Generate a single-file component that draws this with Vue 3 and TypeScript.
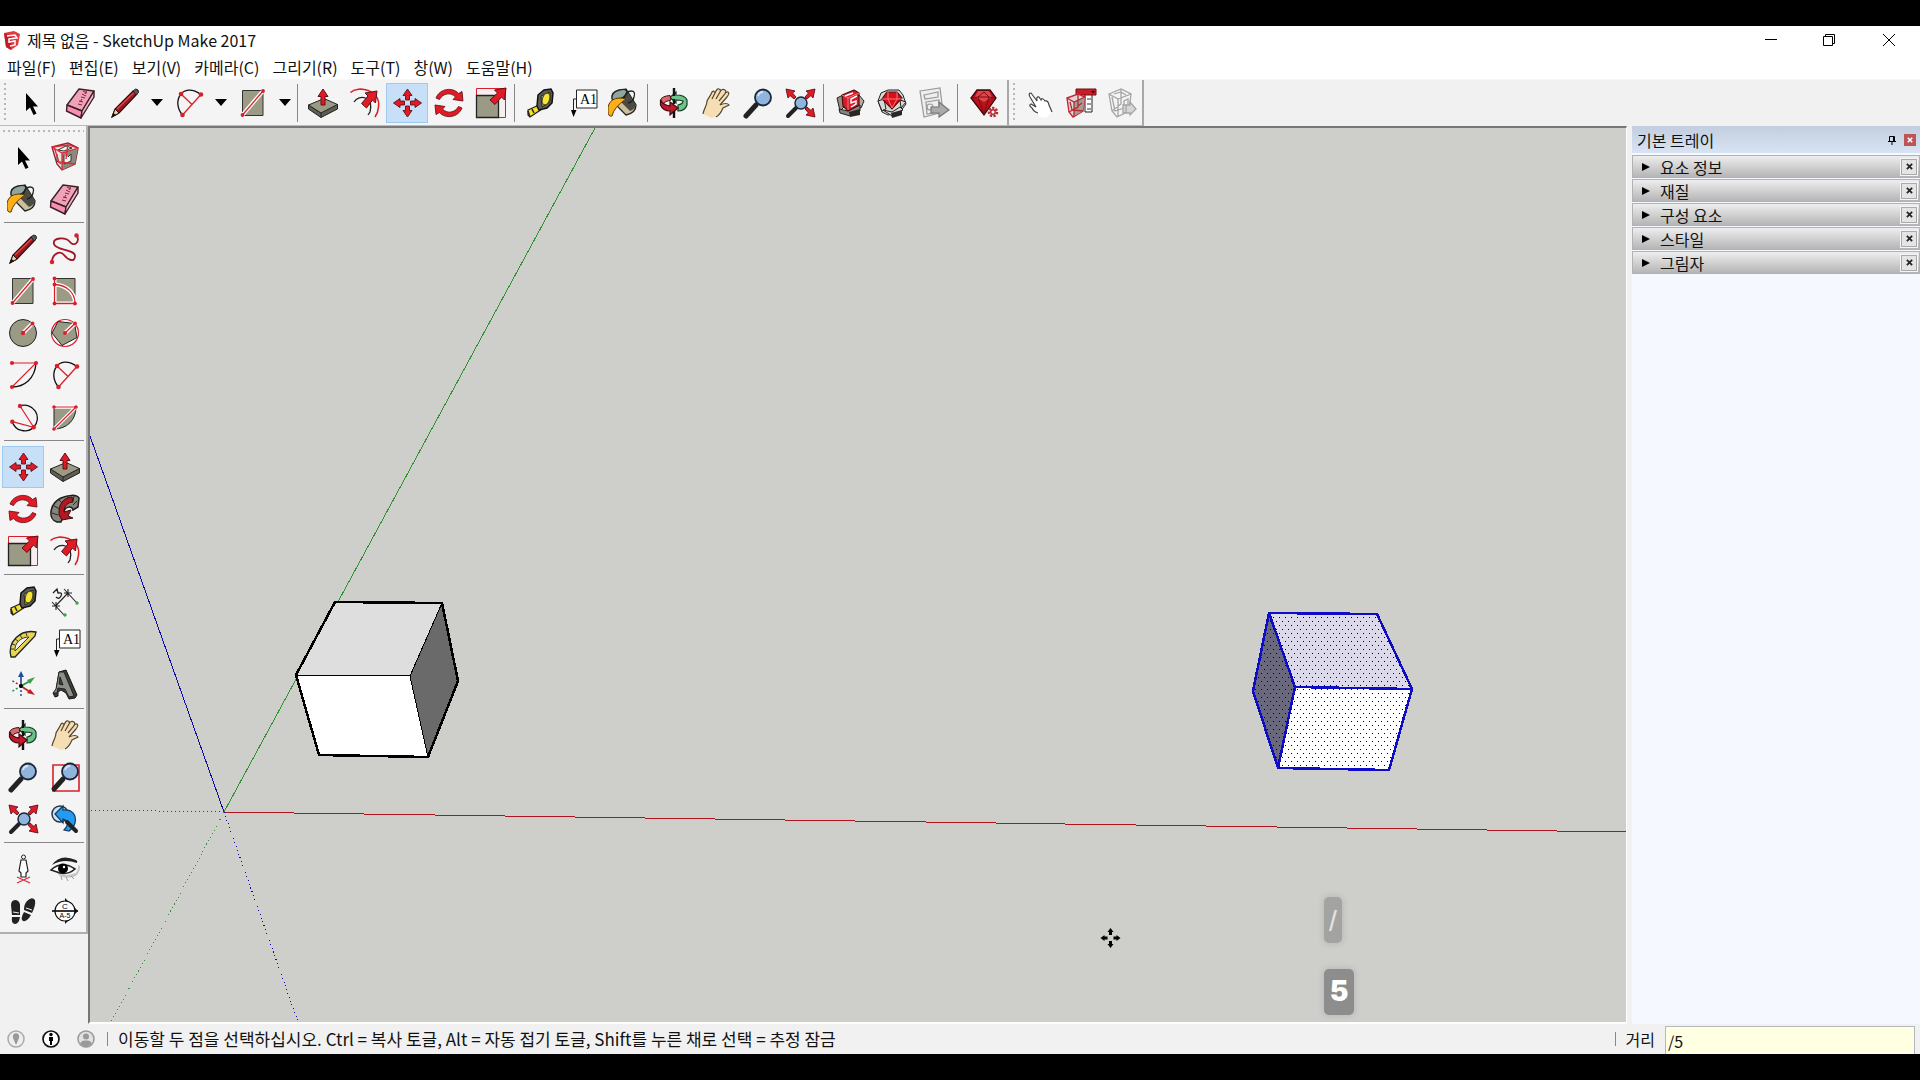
<script setup lang="ts">
import { ref } from 'vue'

interface Tool {
  icon: string
  label: string
  split?: boolean
}

const menus = ['파일(F)', '편집(E)', '보기(V)', '카메라(C)', '그리기(R)', '도구(T)', '창(W)', '도움말(H)']

const mainGroups: Tool[][] = [
  [{ icon: 'select', label: '선택' }],
  [
    { icon: 'eraser', label: '지우개' },
    { icon: 'pencil', label: '선', split: true },
    { icon: 'arc2', label: '호', split: true },
    { icon: 'rect', label: '직사각형', split: true },
  ],
  [
    { icon: 'pushpull', label: '밀기/끌기' },
    { icon: 'offset', label: '오프셋' },
    { icon: 'move', label: '이동' },
    { icon: 'rotate', label: '회전' },
    { icon: 'scale', label: '배율' },
  ],
  [
    { icon: 'tape', label: '줄자' },
    { icon: 'text', label: '텍스트' },
    { icon: 'bucket', label: '페인트통' },
  ],
  [
    { icon: 'orbit', label: '궤도' },
    { icon: 'hand', label: '화면이동' },
    { icon: 'zoom', label: '확대/축소' },
    { icon: 'extents', label: '범위 확대/축소' },
  ],
  [
    { icon: 'warehouse', label: '3D Warehouse' },
    { icon: 'extwarehouse', label: 'Extension Warehouse' },
    { icon: 'layout', label: 'LayOut' },
  ],
  [{ icon: 'gem', label: '확장 관리자' }],
]

const dynamicTools: Tool[] = [
  { icon: 'pointer', label: '상호 작용' },
  { icon: 'options', label: '구성 요소 옵션' },
  { icon: 'attributes', label: '구성 요소 속성' },
]

const sideGroups: Tool[][] = [
  [
    { icon: 'select', label: '선택' },
    { icon: 'component', label: '구성 요소 만들기' },
    { icon: 'bucket', label: '페인트통' },
    { icon: 'eraser', label: '지우개' },
  ],
  [
    { icon: 'pencil', label: '선' },
    { icon: 'freehand', label: '자유곡선' },
    { icon: 'rect', label: '직사각형' },
    { icon: 'rotrect', label: '회전된 직사각형' },
    { icon: 'circle', label: '원' },
    { icon: 'polygon', label: '다각형' },
    { icon: 'arc', label: '호' },
    { icon: 'arc2', label: '2점 호' },
    { icon: 'arc3', label: '3점 호' },
    { icon: 'pie', label: '파이' },
  ],
  [
    { icon: 'move', label: '이동' },
    { icon: 'pushpull', label: '밀기/끌기' },
    { icon: 'rotate', label: '회전' },
    { icon: 'follow', label: '따라가기' },
    { icon: 'scale', label: '배율' },
    { icon: 'offset', label: '오프셋' },
  ],
  [
    { icon: 'tape', label: '줄자' },
    { icon: 'dimension', label: '치수' },
    { icon: 'protractor', label: '각도기' },
    { icon: 'text', label: '텍스트' },
    { icon: 'axes', label: '축' },
    { icon: 'text3d', label: '3D 텍스트' },
  ],
  [
    { icon: 'orbit', label: '궤도' },
    { icon: 'hand', label: '화면이동' },
    { icon: 'zoom', label: '확대/축소' },
    { icon: 'zoomwindow', label: '확대/축소 창' },
    { icon: 'extents', label: '범위 확대/축소' },
    { icon: 'previous', label: '이전' },
  ],
  [
    { icon: 'camera', label: '카메라 배치' },
    { icon: 'eye', label: '둘러보기' },
    { icon: 'walk', label: '걷기' },
    { icon: 'section', label: '단면' },
  ],
]

const panels = ['요소 정보', '재질', '구성 요소', '스타일', '그림자']

const activeTool = ref('move')
const distance = ref('/5')
</script>

<template>
  <div class="screen">
    <svg class="sprite" aria-hidden="true">
      <defs>
        <symbol id="select" viewBox="0 0 32 32">
          <path d="M11 6V24L15 20.500L18.500 28L21.500 26.500L18 19.500H23Z" fill="#000" />
        </symbol>
        <symbol id="eraser" viewBox="0 0 32 32">
          <g stroke="#3a2028" stroke-width="1.400" stroke-linejoin="round">
            <path d="M14 2L29 4L17 24L2 18Z" fill="#f0a3b8" />
            <path d="M2 18L17 24L16 31L1.500 24Z" fill="#fb8fae" />
            <path d="M29 4V10L16 31L17 24Z" fill="#f9bccb" />
          </g>
          <path d="M13 17l4 1m-3-4l4 1m-3 0l2-3m-1-2l4 1m-3-4l4 2m-3-5l4 2m0-3l-2 4" stroke="#7d2540" stroke-width="1" fill="none" />
        </symbol>
        <symbol id="pencil" viewBox="0 0 32 32">
          <path d="M3 30L6 22L24 4L28 7L10 26Z" fill="#a8141b" stroke="#2a1010" stroke-width="1.200" />
          <path d="M8 22L25 5.500" stroke="#dd4a4a" stroke-width="1.300" />
          <path d="M3 30L6 22L10 26Z" fill="#e8d2a0" stroke="#2a1010" />
          <path d="M3 30L4.500 26L7 28Z" fill="#111" />
          <path d="M24 4Q27 .5 29 3T27 8Z" fill="#5a5558" stroke="#222" />
        </symbol>
        <symbol id="freehand" viewBox="0 0 32 32">
          <path d="M3 29C3 21 11 17 15 22S26 30 26 23S7 18 5 11S17 4 21 9S31 10 28 2" fill="none" stroke="#a01824" stroke-width="1.800" />
          <g fill="#d8202c"><circle cx="3" cy="29" r="2.200" /><circle cx="27.500" cy="2.500" r="2.200" /></g>
        </symbol>
        <symbol id="rect" viewBox="0 0 32 32">
          <path d="M5.500 3.500H26V28.500H5.500Z" fill="#9a9a85" stroke="#333" />
          <path d="M5.500 28L26 4" stroke="#fff" stroke-width="4" />
          <path d="M5.500 28L26 4" stroke="#d8202c" stroke-width="1.300" />
          <g fill="#d8202c"><circle cx="5.500" cy="28" r="1.900" /><circle cx="26" cy="4" r="1.900" /></g>
        </symbol>
        <symbol id="rotrect" viewBox="0 0 32 32">
          <path d="M6 3.500H26V28.500H6Z" fill="#9a9a85" stroke="#333" />
          <path d="M5.500 4V28.500H26C26 17 17 10 5.500 9.500" stroke="#fff" stroke-width="4" fill="none" />
          <path d="M5.500 4V28.500H26C26 17 17 10 5.500 9.500" stroke="#d8202c" stroke-width="1.300" fill="none" />
          <g fill="#d8202c"><circle cx="5.500" cy="3.500" r="1.900" /><circle cx="5.500" cy="9.500" r="1.900" /><circle cx="5.500" cy="28.500" r="1.900" /><circle cx="26" cy="28.500" r="1.900" /></g>
        </symbol>
        <symbol id="circle" viewBox="0 0 32 32">
          <circle cx="16" cy="16" r="13.500" fill="#9a9a85" stroke="#222" />
          <path d="M16 16L25.500 6.500" stroke="#fff" stroke-width="4" />
          <path d="M16 16L25.500 6.500" stroke="#d8202c" stroke-width="1.300" />
          <g fill="#d8202c"><circle cx="16" cy="16" r="2.200" /><circle cx="25.500" cy="6.500" r="1.900" /></g>
        </symbol>
        <symbol id="polygon" viewBox="0 0 32 32">
          <circle cx="16" cy="16" r="13.500" fill="#fff" stroke="#d8202c" stroke-width="1.200" />
          <path d="M9 4.500L25.500 6.500L28 20.500L13 28.500L3 16Z" fill="#9a9a85" stroke="#222" />
          <path d="M16 16L26 6.500" stroke="#fff" stroke-width="4" />
          <path d="M16 16L26 6.500" stroke="#d8202c" stroke-width="1.300" />
          <g fill="#d8202c"><circle cx="16" cy="16" r="2" /><circle cx="26" cy="6.500" r="1.900" /></g>
        </symbol>
        <symbol id="arc" viewBox="0 0 32 32">
          <path d="M29 4C28 20 17 28 5 28" fill="none" stroke="#111" stroke-width="1.300" />
          <path d="M5 4H29L5 28" fill="none" stroke="#d8202c" stroke-width="1.100" />
          <g fill="#d8202c"><circle cx="5" cy="4" r="2.100" /><circle cx="29" cy="4" r="2.100" /><circle cx="5" cy="28" r="2.100" /></g>
        </symbol>
        <symbol id="arc2" viewBox="0 0 32 32">
          <path d="M9.500 28C-2 15 9 -6 28 7.500" fill="none" stroke="#111" stroke-width="1.300" />
          <path d="M9.500 28L28 7.500M8 7L19 17.500" fill="none" stroke="#d8202c" stroke-width="1.300" />
          <g fill="#d8202c"><circle cx="8" cy="7" r="2.300" /><circle cx="28" cy="7.500" r="2.300" /><circle cx="9.500" cy="28" r="2.300" /></g>
        </symbol>
        <symbol id="arc3" viewBox="0 0 32 32">
          <path d="M13 5A13 13 0 0 1 26.700 26.300A13 13 0 0 1 5.300 20.700" fill="none" stroke="#111" stroke-width="1.300" />
          <path d="M13 5L26.700 26.300L5.300 20.700" fill="none" stroke="#d8202c" stroke-width="1.200" />
          <g fill="#d8202c"><circle cx="13" cy="5" r="2.200" /><circle cx="5.300" cy="20.700" r="2.200" /><circle cx="26.700" cy="26.300" r="2.200" /></g>
        </symbol>
        <symbol id="pie" viewBox="0 0 32 32">
          <path d="M5 6H27C27 19 18 28 5 28Z" fill="#9a9a85" stroke="#222" />
          <path d="M5 6H27L5 28" fill="none" stroke="#fff" stroke-width="3.500" />
          <path d="M5 6H27L5 28" fill="none" stroke="#d8202c" stroke-width="1.200" />
          <g fill="#d8202c"><circle cx="5" cy="6" r="1.800" /><circle cx="27" cy="6" r="1.800" /><circle cx="5" cy="28" r="1.800" /></g>
        </symbol>
        <symbol id="move" viewBox="0 0 32 32">
          <g fill="#e11b26" stroke="#601018" stroke-width=".9">
            <path id="mv" d="M16.500 2L21 8.500H18.500V13H14.500V8.500H12Z" />
            <use href="#mv" transform="rotate(90 16.500 16)" />
            <use href="#mv" transform="rotate(180 16.500 16)" />
            <use href="#mv" transform="rotate(270 16.500 16)" />
          </g>
        </symbol>
        <symbol id="pushpull" viewBox="0 0 32 32">
          <g stroke="#222" stroke-linejoin="round">
            <path d="M1.500 18V22L14 30.500L30.500 22V17.500Z" fill="#5e5e52" />
            <path d="M1.500 18L17 11.500L30.500 17.500L14 26Z" fill="#9a9a85" />
            <path d="M14 26V30.500" />
          </g>
          <path d="M16 2L21 9.500H18V18H14V9.500H11Z" fill="#e11b26" stroke="#601018" />
        </symbol>
        <symbol id="rotate" viewBox="0 0 32 32">
          <g fill="#e11b26" stroke="#701018" stroke-width=".9">
            <path id="rt" d="M3 11C7 1 20 0 25.500 6.500L29 4.500L30 14L20 12.500L22.500 10C18 5 10 6 6.500 12.500Z" />
            <use href="#rt" transform="rotate(180 16 16)" />
          </g>
        </symbol>
        <symbol id="follow" viewBox="0 0 32 32">
          <path d="M8 29C-2 26 1 10 12 5C19 2 27 1 30 5L29 14L24 17C23 12 16 14 15 18C13 23 14 25 12 29Z" fill="#85857a" stroke="#1d1d1d" stroke-width="1.500" />
          <path d="M3 20L9 22M5 13L11 16M10 7L14 11M18 3L20 7M25 3L24 8M28 8L24 12" stroke="#282828" />
          <path d="M10 19C10 9 17 4 23 4L24 9C19 9 15 13 15 19L22 17L19 23L24 25L13 27L10 22Z" fill="#b11822" stroke="#3c0d10" />
        </symbol>
        <symbol id="scale" viewBox="0 0 32 32">
          <path d="M1.500 1.500H30.500V30.500H1.500Z" fill="#f8eef0" stroke="#d8202c" />
          <path d="M1.500 8.500H23.500V30.500H1.500Z" fill="#9a9a85" stroke="#222" stroke-width="1.300" />
          <path d="M31 1L19.500 3L22.500 6L15 13L20 17.500L26.500 10L29.500 13Z" fill="#e11b26" stroke="#601018" />
        </symbol>
        <symbol id="offset" viewBox="0 0 32 32">
          <path d="M1.500 5.500C9 -2 32 3 29.500 20Q29 26 26 30" fill="none" stroke="#d8202c" stroke-width="1.600" />
          <path d="M5 15C10 7 25 9 21 25L19 28" fill="none" stroke="#222" stroke-width="1.300" />
          <path d="M28 4L16 6L19 9L12.500 16.500L17.500 21L23.500 13L26.500 16Z" fill="#e11b26" stroke="#601018" />
        </symbol>
        <symbol id="tape" viewBox="0 0 32 32">
          <path d="M4 23L15 18L18 22L6 30L4 28Z" fill="#f4e12e" stroke="#222" stroke-width="1.200" />
          <path d="M4 24L6 30M8 22L10 26" stroke="#222" stroke-width="1.500" />
          <path d="M14 8L20 3L27 2L29 6L28 16L23 21L15 23L13 19Z" fill="#5c5c55" stroke="#111" stroke-width="1.500" />
          <path d="M17 9L26 5L26 15L18 20Z" fill="#a6a697" stroke="#222" />
          <ellipse cx="22" cy="12" rx="3.500" ry="6" transform="rotate(18 22 12)" fill="#f5e535" stroke="#4a4616" />
        </symbol>
        <symbol id="dimension" viewBox="0 0 32 32">
          <path d="M6.500 21L19 8M3 17L15 30M15 4L27 17M3 21H11M7 17V25M15 8H23M19 4V12" stroke="#222" stroke-width="1.100" />
          <circle cx="16" cy="30" r="1.700" fill="#43a047" /><circle cx="28" cy="18" r="1.700" fill="#43a047" />
          <path d="M4 8l4-4 1 4q5-1 3 3t-5 1" fill="none" stroke="#222" stroke-width="1.300" />
        </symbol>
        <symbol id="protractor" viewBox="0 0 32 32">
          <path d="M4 30C0 15 13 2 29 5L28 9L8 30Z" fill="#e9d64c" stroke="#222" stroke-width="1.300" />
          <path d="M8 24C7 16 14 10 22 10Z" fill="#f3f3f3" stroke="#333" />
          <path d="M4 22l3 0M5 17l3 1M8 12l3 2M13 8l2 3M19 6l1 3" stroke="#333" />
        </symbol>
        <symbol id="text" viewBox="0 0 32 32">
          <path d="M10.500 3H31V21H10.500Z" fill="#fff" stroke="#222" />
          <path d="M10.500 12H7.500V25" fill="none" stroke="#222" /><path d="M5 23H10.500L7.500 30Z" />
          <text x="14" y="17" font-family="Liberation Serif, serif" font-size="14">A1</text>
        </symbol>
        <symbol id="bucket" viewBox="0 0 32 32">
          <path d="M5 7L18 2L28 18Q28 26 18 28L8 18Z" fill="#cdbf99" stroke="#222" stroke-width="1.300" />
          <path d="M18 3L28 18Q27 22 22 24L12 14Z" fill="#4a4b43" />
          <path d="M4 12Q3 5 11 3T19 5Q17 13 5 13Z" fill="#8fa5a2" stroke="#222" stroke-width="1.400" />
          <path d="M16 12Q18 4 23 4T26 10Q25 15 20 16" fill="none" stroke="#222" stroke-width="1.300" />
          <path d="M18 12C8 9 -1 13 0 24Q0 30 4 29Q6 20 18 12Z" fill="#ffae18" stroke="#553b0c" />
        </symbol>
        <symbol id="orbit" viewBox="0 0 32 32">
          <path d="M12 10.500L18 5V8Q27 8 29 13V18Q27 24 20 24V18Q25 17 25 14Q22 13 18 13V16Z" fill="#6cc48d" stroke="#153b21" stroke-width="1.200" />
          <path d="M12 8.500Q4 9 2.500 13L5 17Q7 14 13 13Z" fill="#d9686c" stroke="#3f0b12" />
          <path d="M2.500 13V18Q5 24 12 24V28L20 21L12 15V19Q5 18 2.500 13Z" fill="#c2172c" stroke="#3f0b12" stroke-width="1.200" />
          <path d="M16 1V9M16 12V17M16 24V31" stroke="#111" stroke-width="2.400" />
        </symbol>
        <symbol id="hand" viewBox="0 0 32 32">
          <path d="M3 27C4 21 7 19 7 14C9 10 11 8 12 5Q14 3 15 6Q17 1 19 2Q21 2 20 5Q22 1 25 3Q26 3 24 8Q26 4 28 5Q30 6 27 10L20 18Q27 15 29 18L23 21Q20 29 12 31Z" fill="#f5deb4" />
          <path d="M3 27C4 21 7 19 7 14C9 10 11 8 12 5Q14 3 15 6L12 12M15 6Q17 1 19 2Q21 2 20 5L16 12M20 5Q22 1 25 3Q27 4 24 8L19 14M24 8Q26 4 28 5Q30 6 27 10L20 18Q27 15 29 18L23 21Q20 28 16 30" fill="none" stroke="#57452e" stroke-width="1.200" />
        </symbol>
        <symbol id="zoom" viewBox="0 0 32 32">
          <path d="M14 18L4 29" stroke="#222" stroke-width="5" stroke-linecap="round" />
          <path d="M16 17L18 15" stroke="#222" stroke-width="3" />
          <circle cx="21" cy="10.500" r="8" fill="#8fb5dd" stroke="#1d2638" stroke-width="1.800" />
          <path d="M16 9Q17 5 21 5" fill="none" stroke="#d5e6f6" stroke-width="1.800" />
        </symbol>
        <symbol id="zoomwindow" viewBox="0 0 32 32">
          <path d="M4 4H30V30H4Z" fill="none" stroke="#d8202c" stroke-width="1.600" />
          <path d="M14 18L5 28" stroke="#222" stroke-width="5" stroke-linecap="round" />
          <circle cx="21" cy="10.500" r="8" fill="#8fb5dd" stroke="#1d2638" stroke-width="1.800" />
          <path d="M16 9Q17 5 21 5" fill="none" stroke="#d5e6f6" stroke-width="1.800" />
        </symbol>
        <symbol id="extents" viewBox="0 0 32 32">
          <path d="M12 21L4 29" stroke="#222" stroke-width="4" stroke-linecap="round" />
          <circle cx="17" cy="16" r="6" fill="#8fb5dd" stroke="#1d2638" stroke-width="1.500" />
          <g fill="#e11b26" stroke="#601018" stroke-width=".9">
            <path id="ex" d="M2 2L11 4L8.500 6L12 10L10 12L6 8.500L4 11Z" />
            <use href="#ex" transform="matrix(-1 0 0 1 33 0)" />
            <use href="#ex" transform="matrix(-1 0 0 -1 33 32)" />
          </g>
        </symbol>
        <symbol id="previous" viewBox="0 0 32 32">
          <circle cx="11" cy="11" r="8" fill="#cfe1f1" stroke="#26364a" stroke-width="1.500" />
          <path d="M6 11L14 3V7C23 6 28 12 26 20Q25 24 20 28L15 27Q20 22 18 18L14 16V20Z" fill="#249af2" stroke="#12395e" stroke-width="1.200" />
          <path d="M18 19L27 28" stroke="#222" stroke-width="4" stroke-linecap="round" />
        </symbol>
        <symbol id="warehouse" viewBox="0 0 32 32">
          <g stroke="#222" stroke-linejoin="round">
            <path d="M3 11L9 8L10 20L6 24Z" fill="#9c8e83" />
            <path d="M25 8L30 14L27 21L22 19Z" fill="#b8aaa0" />
            <path d="M5 22L14 24L26 18V24L16 29L6 26Z" fill="#8b827a" />
            <path d="M8 8L20 3L25 6L25 18L14 24L9 19Z" fill="#d81c2a" stroke="#4a1016" stroke-width="1.200" />
          </g>
          <path d="M8 8L14 11L25 6M14 11V23" fill="none" stroke="#f2777e" />
          <path d="M23 9L17 12V16L22 14V17L17 20M11 9L19 6" fill="none" stroke="#fff" stroke-width="1.400" />
          <path d="M15 25L26 22V28L16 30Z" fill="#2a2725" />
        </symbol>
        <symbol id="extwarehouse" viewBox="0 0 32 32">
          <g stroke="#222" stroke-linejoin="round" fill="#d8d8d5">
            <path d="M5 6L12 3L23 3L27 8L30 17L24 25L12 28L6 25L2 14Z" />
            <path d="M2 14L8 12L10 22L6 24ZM24 13L30 15L25 21ZM7 23L16 25L24 20L27 23L16 29Z" />
          </g>
          <path d="M11 5H21L26 11L16 22L6 12Z" fill="#d9101b" stroke="#521014" stroke-width="1.200" />
          <path d="M6 12H26M12 5L12 12L16 21L21 12V5" fill="none" stroke="#ff7277" />
          <path d="M15 26L26 23V28L16 31Z" fill="#2a2725" />
        </symbol>
        <symbol id="layout" viewBox="0 0 32 32">
          <g fill="#eee" stroke="#999" stroke-width="1.200">
            <path d="M2 4L22 1L25 25L6 30Z" /><path d="M6 8L20 5V10L7 12Z" /><path d="M8 15L21 13V25L9 27Z" />
            <circle cx="12" cy="20" r="3" /><path d="M13 20H21V15L31 23L21 30V26H13Z" fill="#aaa" stroke="#777" />
          </g>
        </symbol>
        <symbol id="gem" viewBox="0 0 32 32">
          <path d="M9 3H22L28 11L16 28L3 11Z" fill="#bb1018" stroke="#3c080c" stroke-width="1.300" />
          <path d="M10 4H21L24 10L16 15L7 10Z" fill="#e24347" />
          <path d="M4 11L10 10L16 5L21 10L27 11M10 10L16 27L21 10Z" fill="none" stroke="#701015" />
          <circle cx="25" cy="25" r="4" fill="#fbdcdc" stroke="#b62b32" stroke-width="2.500" stroke-dasharray="2.200 1.300" />
          <circle cx="25" cy="25" r="3" fill="#b62b32" /><circle cx="25" cy="25" r="1.500" fill="#fff" />
        </symbol>
        <symbol id="pointer" viewBox="0 0 32 32">
          <path d="M16 30L14 26Q10 25 8 21Q4 18 7 17L12 20L6 10Q4 6 7 6L13 14Q12 9 15 10L17 13Q18 10 21 14Q24 13 25 18L28 25L22 31Z" fill="#fff" />
          <path d="M14 26Q10 25 8 21Q4 18 7 17L12 20L6 10Q4 6 7 6L13 14Q12 9 15 10L17 13Q18 10 21 14Q24 13 25 18L28 25" fill="none" stroke="#444" stroke-width="1.200" />
        </symbol>
        <symbol id="component" viewBox="0 0 32 32">
          <path d="M3 6L19 2L29 7L26 23L13 29L8 23Z" fill="#e8e5e2" stroke="#98202b" stroke-width="1.400" />
          <path d="M13 12L29 7L26 23L13 29Z" fill="#8b8b7d" />
          <path d="M9 9L17 5L23 7L15 10ZM8 13V20L12 23M15 14V23L22 20V13L19 16" stroke="#333" fill="#f6f4f0" />
          <path d="M3 6L13 12L29 7M13 12V29M5 6L10 21L26 23M19 2L17 18M3 6L19 4L29 7" fill="none" stroke="#df2836" stroke-width="1.300" />
        </symbol>
        <symbol id="options" viewBox="0 0 32 32">
          <path d="M20 7H27V25H20Z" fill="#fff" stroke="#222" /><path d="M22 12H26M22 17H26M22 22H26" stroke="#333" />
          <path d="M11 2H31V8H11Z" fill="#cf1b27" stroke="#681018" /><path d="M26 4H30L28 6.500Z" />
          <path d="M2 11L13 7L20 10L18 24L8 30L4 25Z" fill="#ded8d4" stroke="#c52b37" stroke-width="1.400" />
          <path d="M9 15L20 10L18 24L9 29Z" fill="#a59c94" />
          <path d="M2 11L9 15L20 10M9 15V30M5 15L7 23L18 24M13 7V20L4 25M13 19L17 16" fill="none" stroke="#b52733" stroke-width="1.300" />
        </symbol>
        <symbol id="attributes" viewBox="0 0 32 32">
          <g fill="none" stroke="#a5a5a5" stroke-width="1.300">
            <path d="M3 7L15 2L25 7L23 24L11 30L6 24ZM3 7L12 12L25 7M12 12V29M6 10L9 24L18 21V14L22 12V19M8 7L15 5L20 8M15 2V17L6 24" />
            <path d="M17 18H24V15L30 22L24 28V26H17ZM20 18V26" fill="#d5d5d5" />
          </g>
        </symbol>
        <symbol id="axes" viewBox="0 0 32 32">
          <g stroke-width="1.500" stroke-dasharray="2 2"><path d="M14 17V29" stroke="#21509c" /><path d="M14 17L4 11" stroke="#c02026" /><path d="M14 17L4 23" stroke="#2f8e3d" /></g>
          <g stroke-width="1.700"><path d="M14 17V6" stroke="#21509c" /><path d="M14 17L23 12" stroke="#2f8e3d" /><path d="M14 17L23 23" stroke="#c02026" /></g>
          <path d="M14 2L17 8H11Z" fill="#21509c" /><path d="M28 8L23 15L20 11Z" fill="#3f9d4b" /><path d="M28 26L20 24L23 20Z" fill="#c02026" /><circle cx="14" cy="17" r="2" />
        </symbol>
        <symbol id="text3d" viewBox="0 0 32 32">
          <path d="M10 3L17 1L28 26L26 29L20 30L17 24L12 21L9 23V27L6 28L4 24L7 22Z" fill="#3c3e38" stroke="#171717" />
          <path d="M10 3L15 3L25 27L20 28L16 20L9 19L8 24L4 24L7 20ZM11 8L10 15L14 16Z" fill="#8b9086" stroke="#222" fill-rule="evenodd" />
        </symbol>
        <symbol id="camera" viewBox="0 0 32 32">
          <circle cx="16.500" cy="4" r="2" fill="#fff" stroke="#222" />
          <path d="M14 7H19L21 18L19 20V24H14V20L12 18Z" fill="#fff" stroke="#222" stroke-width="1.200" />
          <path d="M10 30L23 24M10 24L23 30" stroke="#df2836" stroke-width="1.300" />
        </symbol>
        <symbol id="eye" viewBox="0 0 32 32">
          <path d="M3 12Q11 0 27 7Q29 8 28 10Q14 5 3 12Z" fill="#222" />
          <path d="M8 20Q16 24 27 20Q30 16 29 12L31 13Q31 22 24 24Q12 26 8 20Z" fill="#c4c4c4" />
          <path d="M2 17Q13 7 26 16Q18 23 8 19Z" fill="#fff" stroke="#222" stroke-width="1.600" />
          <circle cx="14" cy="15.500" r="5" /><circle cx="15" cy="14" r="1.200" fill="#fff" />
          <path d="M12 23L13 27M17 24L19 28M22 23L25 26" stroke="#999" />
        </symbol>
        <symbol id="walk" viewBox="0 0 32 32">
          <path d="M4 10Q4 5 9 5Q14 6 13 14L13 20L5 20Z" fill="#222" /><path d="M5 22L13 22Q12 29 8 29Q4 29 5 22Z" fill="#222" />
          <path d="M20 6Q25 1 28 5Q29 10 25 18L17 15Q17 9 20 6Z" fill="#222" /><path d="M17 17L24 20Q20 27 16 26Q13 24 17 17Z" fill="#222" />
          <path d="M6 17L12 18M19 13L25 15" stroke="#f3f3f3" />
        </symbol>
        <symbol id="section" viewBox="0 0 32 32">
          <path d="M16 3L29 16L16 29Z" fill="#111" /><circle cx="16" cy="16" r="10" fill="#fff" stroke="#111" stroke-width="1.200" /><path d="M3 16H29" stroke="#111" stroke-width="1.700" />
          <text x="16" y="14" text-anchor="middle" font-family="Liberation Sans, sans-serif" font-size="8">C</text>
          <text x="16" y="23" text-anchor="middle" font-family="Liberation Sans, sans-serif" font-size="7">A-5</text>
        </symbol>
      </defs>
    </svg>

    <header class="titlebar">
      <svg class="logo" viewBox="0 0 18 20" aria-hidden="true">
        <path d="M1 3L11 1L17 4L15 15L8 20L3 17Z" fill="#e23a40" />
        <path d="M1 3L9 6L8 20L3 17Z" fill="#c41c25" />
        <path d="M4 6L12 5L14 8L6 9V12L12 11V15L7 16" fill="none" stroke="#fff" stroke-width="1.500" />
      </svg>
      <h1 class="title">제목 없음 - SketchUp Make 2017</h1>
      <div class="window-buttons">
        <button aria-label="최소화"><svg viewBox="0 0 14 14"><path d="M1 6.500H13" /></svg></button>
        <button aria-label="이전 크기로"><svg viewBox="0 0 14 14"><path d="M1.500 3.500H10.500V12.500H1.500ZM3.500 3V1.500H12.500V10.500H11" /></svg></button>
        <button aria-label="닫기"><svg viewBox="0 0 14 14"><path d="M1 1L13 13M13 1L1 13" /></svg></button>
      </div>
    </header>

    <nav class="menubar">
      <button v-for="menu in menus" :key="menu">{{ menu }}</button>
    </nav>

    <div class="toolbars">
      <div class="toolbar">
        <span class="grip"></span>
        <div v-for="(group, i) in mainGroups" :key="i" class="group" :class="{ roomy: i > 3 }">
          <template v-for="tool in group" :key="tool.icon">
            <button class="tool" :class="{ active: tool.icon === activeTool, wide: i === 1 }" :aria-label="tool.label" @click="activeTool = tool.icon">
              <svg class="icon"><use :href="'#' + tool.icon" /></svg>
            </button>
            <button v-if="tool.split" class="drop" :aria-label="tool.label + ' 메뉴'"><span class="caret"></span></button>
          </template>
        </div>
      </div>
      <div class="toolbar dynamic">
        <span class="grip"></span>
        <button v-for="tool in dynamicTools" :key="tool.icon" class="tool" :aria-label="tool.label">
          <svg class="icon"><use :href="'#' + tool.icon" /></svg>
        </button>
      </div>
    </div>

    <div class="workspace">
      <aside class="sidebar">
        <div class="palette">
          <div class="side-grip"></div>
          <div v-for="(group, i) in sideGroups" :key="i" class="side-group">
            <button v-for="tool in group" :key="tool.icon" class="tool" :class="{ active: tool.icon === activeTool }" :aria-label="tool.label" @click="activeTool = tool.icon">
              <svg class="icon"><use :href="'#' + tool.icon" /></svg>
            </button>
          </div>
        </div>
      </aside>

      <main class="viewport">
        <svg class="scene" viewBox="90 128 1536 894" preserveAspectRatio="xMinYMin slice" aria-label="모델">
          <defs>
            <pattern id="dots" width="6" height="8" patternUnits="userSpaceOnUse">
              <path d="M1 1h1v1h-1zM4 5h1v1h-1z" fill="#000" />
            </pattern>
          </defs>
          <g fill="none" shape-rendering="crispEdges">
            <path d="M224 812L595 128" stroke="#2f9332" />
            <path d="M224 812L90 436" stroke="#0b0ba8" />
            <path d="M224 812L1626 832" stroke="#b0141c" />
            <g stroke-dasharray="1 3">
              <path d="M224 812L90 810" stroke="#8d2024" />
              <path d="M224 812L111 1022" stroke="#3b8a3d" />
              <path d="M224 812L298 1022" stroke="#0b0ba8" />
            </g>
          </g>
          <g shape-rendering="crispEdges" stroke-linejoin="round">
            <path d="M335 602L442 603L410 676L296 675Z" fill="#dedede" />
            <path d="M296 675L410 676L428 757L319 755Z" fill="#fff" />
            <path d="M442 603L458 681L428 757L410 676Z" fill="#6a6a6a" />
            <path d="M296 675L410 676L442 603M410 676L428 757" fill="none" stroke="#000" />
            <path d="M335 602L442 603L458 681L428 757L319 755L296 675Z" fill="none" stroke="#000" stroke-width="2.500" />
          </g>
          <g shape-rendering="crispEdges" stroke-linejoin="round">
            <path d="M1269 613L1377 614L1412 689L1295 687Z" fill="#dcd9ea" />
            <path d="M1295 687L1412 689L1389 770L1278 768Z" fill="#fff" />
            <path d="M1269 613L1295 687L1278 768L1253 691Z" fill="#6a687c" />
            <path d="M1269 613L1377 614L1412 689L1389 770L1278 768L1253 691Z" fill="url(#dots)" />
            <path d="M1269 613L1377 614L1412 689L1389 770L1278 768L1253 691ZL1295 687L1412 689M1295 687L1278 768" fill="none" stroke="#0e0cc4" stroke-width="2.500" />
          </g>
          <g>
            <path id="cur" d="M1110.500 928L1113.500 932H1112V935H1109V932H1107.500Z" />
            <use href="#cur" transform="rotate(90 1110.500 938)" />
            <use href="#cur" transform="rotate(180 1110.500 938)" />
            <use href="#cur" transform="rotate(270 1110.500 938)" />
          </g>
        </svg>
        <div class="keys">
          <kbd class="fading">/</kbd>
          <kbd>5</kbd>
        </div>
      </main>

      <aside class="tray">
        <header class="tray-head">
          <h2>기본 트레이</h2>
          <button class="pin" aria-label="고정"><svg viewBox="0 0 10 10"><path d="M2.500 6V1.500H7.500V6M1 6.500H9M5 7V10M6.500 1V6" /></svg></button>
          <button class="tray-close" aria-label="트레이 닫기"><svg viewBox="0 0 8 8"><path d="M1 1L7 7M7 1L1 7" /></svg></button>
        </header>
        <section v-for="panel in panels" :key="panel" class="panel">
          <button class="panel-title"><span class="expand"></span>{{ panel }}</button>
          <button class="panel-close" :aria-label="panel + ' 닫기'"><svg viewBox="0 0 8 8"><path d="M1 1L7 7M7 1L1 7" /></svg></button>
        </section>
      </aside>
    </div>

    <footer class="status">
      <button aria-label="지리적 위치">
        <svg viewBox="0 0 18 18"><circle cx="9" cy="9" r="8" fill="#eee" stroke="#aaa" stroke-width="1.500" /><path d="M9 15L6 8Q5 4 9 3Q13 4 12 8Z" fill="#999" /></svg>
      </button>
      <button aria-label="크레딧">
        <svg viewBox="0 0 18 18"><circle cx="9" cy="9" r="8" fill="#fff" stroke="#111" stroke-width="1.700" /><circle cx="9" cy="4.500" r="1.700" /><path d="M7 7H11V11H10V15H8V11H7Z" /></svg>
      </button>
      <button aria-label="로그인">
        <svg viewBox="0 0 18 18"><circle cx="9" cy="9" r="8" fill="#e2e2e2" stroke="#999" stroke-width="1.500" /><circle cx="9" cy="6.500" r="3" fill="#999" /><path d="M3 14Q4 10 9 10.500Q14 10 15 14L9 17Z" fill="#999" /></svg>
      </button>
      <span class="divider"></span>
      <p class="hint">이동할 두 점을 선택하십시오. Ctrl = 복사 토글, Alt = 자동 접기 토글, Shift를 누른 채로 선택 = 추정 잠금</p>
      <span class="divider"></span>
      <label class="measure-label" for="measure">거리</label>
      <input id="measure" v-model="distance" class="measure" type="text" />
    </footer>
  </div>
</template>

<style>
body {
  margin: 0;
  background: #000;
}
</style>

<style scoped>
.screen {
  box-sizing: border-box;
  height: 100vh;
  padding: 26px 0;
  display: flex;
  flex-direction: column;
  overflow: hidden;
  background: #000;
  color: #111;
  font-family: "Noto Sans CJK KR", sans-serif;
  font-size: 16px;
  line-height: 24px;
}
.sprite {
  position: absolute;
  width: 0;
  height: 0;
}
button {
  display: flex;
  align-items: center;
  justify-content: center;
  flex: none;
  padding: 0;
  border: 0;
  background: none;
  color: inherit;
  font: inherit;
}
h1, h2, p {
  margin: 0;
  font-size: inherit;
  font-weight: 400;
}
.titlebar {
  display: flex;
  align-items: center;
  height: 28px;
  background: #fff;
}
.logo {
  width: 18px;
  height: 20px;
  margin: 0 6px 0 3px;
}
.title {
  flex: 1;
}
.window-buttons {
  display: flex;
}
.window-buttons button {
  width: 58px;
  height: 28px;
}
.window-buttons button:last-child {
  width: 62px;
}
.window-buttons svg {
  width: 14px;
  height: 14px;
  fill: none;
  stroke: #000;
}
.menubar {
  display: flex;
  gap: 13px;
  height: 25px;
  padding-left: 7px;
  background: #fff;
}
.toolbars {
  display: flex;
  height: 47px;
  background: #f1f1f1;
  border-top: 1px solid #f8f8f8;
  box-sizing: border-box;
}
.toolbar {
  display: flex;
  align-items: center;
  background: #f4f4f4;
  border-right: 2px solid #a8a8a8;
  border-bottom: 1px solid #bbb;
}
.grip {
  width: 2px;
  height: 40px;
  margin: 0 4px;
  background: repeating-linear-gradient(#b8b8b8 0 2px, transparent 2px 5px);
}
.group {
  display: flex;
  align-items: center;
  padding-right: 2px;
}
.group + .group {
  padding-left: 4px;
  border-left: 1px solid #888;
  height: 38px;
}
.group + .roomy {
  padding-left: 5px;
}
.tool {
  width: 42px;
  height: 42px;
  box-sizing: border-box;
}
.toolbar .tool {
  height: 40px;
}
.toolbar .wide {
  width: 44px;
}
.dynamic .tool {
  width: 41px;
}
.tool.active {
  background: #c7e0f7;
  border: 1px solid #9ccaf0;
}
.icon {
  width: 32px;
  height: 32px;
  flex: none;
}
.drop {
  width: 20px;
  height: 40px;
}
.caret {
  border: 6px solid transparent;
  border-top: 7px solid #000;
  border-bottom: 0;
}
.workspace {
  display: flex;
  flex: 1;
  min-height: 0;
  background: #f1f1f1;
}
.sidebar {
  width: 88px;
  flex: none;
}
.palette {
  padding-left: 2px;
  background: #f4f4f4;
  border-right: 2px solid #b0b0b0;
  border-bottom: 2px solid #b0b0b0;
}
.side-grip {
  height: 2px;
  margin: 0 2px 4px 1px;
  border-top: 4px solid #f4f4f4;
  background: repeating-linear-gradient(90deg, #b8b8b8 0 2px, transparent 2px 5px);
}
.side-group {
  display: grid;
  grid-template-columns: 42px 42px;
}
.side-group + .side-group {
  margin-top: 2px;
  padding-top: 5px;
  background: linear-gradient(#888, #888) 2px 0 / 80px 1px no-repeat;
  border-top: 1px solid transparent;
  background-origin: border-box;
}
.viewport {
  position: relative;
  flex: 1;
  min-width: 0;
  overflow: hidden;
  background: #cececa;
  border: 2px solid #777;
  border-right: 1px solid #fff;
  border-bottom: 2px solid #fff;
}
.scene {
  display: block;
  width: 100%;
  height: 100%;
}
.keys {
  position: absolute;
  right: 272px;
  bottom: 7px;
  display: flex;
  flex-direction: column;
  align-items: flex-start;
  gap: 26px;
}
kbd {
  width: 30px;
  height: 46px;
  border-radius: 5px;
  background: #8d8d8d;
  box-shadow: 0 0 5px 2px #bebebe;
  color: #fff;
  font: 900 28px/45px Inter, "Liberation Sans", sans-serif;
  text-align: center;
}
kbd.fading {
  width: 18px;
  background: #a3a3a1;
  color: #e2e2e2;
  font-size: 24px;
  font-weight: 500;
}
.tray {
  width: 288px;
  flex: none;
  margin-left: 5px;
  background: #f5f8ff;
}
.tray-head {
  display: flex;
  align-items: center;
  height: 27px;
  margin-bottom: 2px;
  padding: 0 4px 0 5px;
  background: linear-gradient(#c2cedf, #d8e3f3);
}
.tray-head h2 {
  flex: 1;
}
.tray-head svg {
  width: 10px;
  height: 10px;
  fill: none;
  stroke: #000;
  stroke-width: 2;
}
.pin {
  width: 16px;
  margin-right: 4px;
}
.tray-head .pin svg {
  stroke-width: 1;
}
.tray-head .tray-close {
  width: 12px;
  height: 12px;
  background: #bd5458;
}
.tray-head .tray-close svg {
  width: 6px;
  height: 6px;
  stroke: #fff;
}
.panel {
  display: flex;
  align-items: center;
  box-sizing: border-box;
  height: 23px;
  margin-bottom: 1px;
  padding-right: 2px;
  border: 1px solid #b2b2b2;
  background: linear-gradient(#eee, #b5b5b5);
}
.panel-title {
  flex: 1;
  justify-content: flex-start;
  height: 20px;
  padding-left: 9px;
  line-height: 20px;
}
.expand {
  margin-right: 10px;
  border: 4px solid transparent;
  border-left: 8px solid #000;
  border-right: 0;
}
.panel-close {
  box-sizing: border-box;
  width: 16px;
  height: 16px;
  border: 1px solid #aaa;
  outline: 1px solid #f5f5f5;
  background: #e4e4e4;
}
.panel-close svg {
  width: 7px;
  height: 7px;
  flex: none;
  stroke: #222;
  stroke-width: 2;
}
.status {
  display: flex;
  align-items: center;
  height: 30px;
  padding: 0 5px 0 7px;
  background: #f1f1f1;
}
.status button {
  width: 18px;
  height: 18px;
  margin-right: 17px;
}
.status button svg {
  width: 18px;
  height: 18px;
}
.divider {
  width: 1px;
  height: 14px;
  background: #888;
}
.status button + .divider {
  margin-left: -5px;
}
.hint {
  flex: 1;
  padding-left: 10px;
  font-size: 17px;
  white-space: nowrap;
}
.measure-label {
  margin: 0 10px;
}
.measure {
  box-sizing: border-box;
  width: 250px;
  height: 28px;
  margin-top: 2px;
  padding: 0 2px;
  border: 1px solid #b3b8bf;
  border-bottom: 0;
  background: #ffffe1;
  color: #111;
  font: inherit;
  outline: none;
}
</style>
